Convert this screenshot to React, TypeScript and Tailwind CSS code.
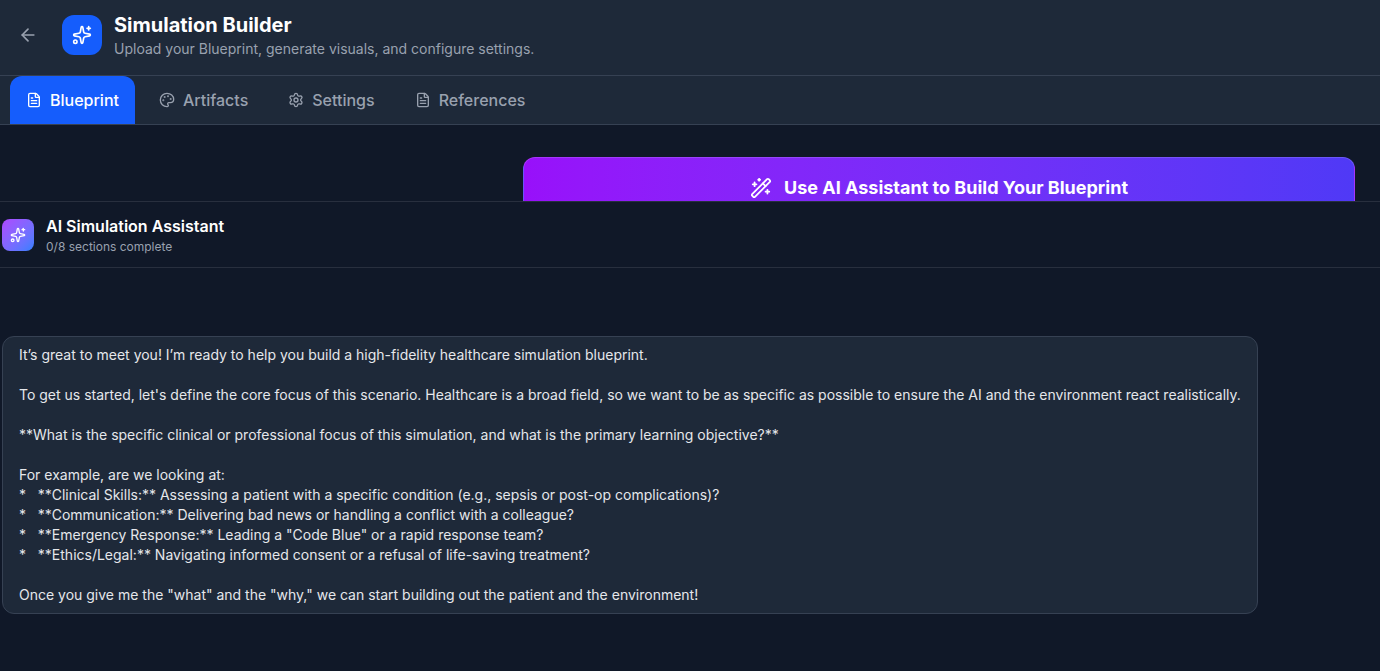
import React, { useState } from 'react';
import { ArrowLeft, FileText, Palette, Settings, Sparkles, WandSparkles } from 'lucide-react';

const tabs = [
  { id: 'blueprint', label: 'Blueprint', icon: FileText },
  { id: 'artifacts', label: 'Artifacts', icon: Palette },
  { id: 'settings', label: 'Settings', icon: Settings },
  { id: 'references', label: 'References', icon: FileText },
];

const greeting = `It’s great to meet you! I’m ready to help you build a high-fidelity healthcare simulation blueprint.

To get us started, let's define the core focus of this scenario. Healthcare is a broad field, so we want to be as specific as possible to ensure the AI and the environment react realistically.

**What is the specific clinical or professional focus of this simulation, and what is the primary learning objective?**

For example, are we looking at:
*   **Clinical Skills:** Assessing a patient with a specific condition (e.g., sepsis or post-op complications)?
*   **Communication:** Delivering bad news or handling a conflict with a colleague?
*   **Emergency Response:** Leading a "Code Blue" or a rapid response team?
*   **Ethics/Legal:** Navigating informed consent or a refusal of life-saving treatment?

Once you give me the "what" and the "why," we can start building out the patient and the environment!`;

function PageHeader() {
  return (
    <header className="flex items-center border-b border-gray-700 bg-gray-800 px-2 pt-[11px] pb-4">
      <button type="button" aria-label="Back" className="mr-3.5 rounded-lg p-2.5 text-gray-400 hover:bg-gray-700">
        <ArrowLeft className="size-5" />
      </button>
      <div className="mr-3 flex size-10 items-center justify-center rounded-xl bg-[#155dfc]">
        <Sparkles className="size-5" />
      </div>
      <div>
        <h1 className="text-xl font-bold">Simulation Builder</h1>
        <p className="text-sm text-gray-400">Upload your Blueprint, generate visuals, and configure settings.</p>
      </div>
    </header>
  );
}

export default function App() {
  const [activeTab, setActiveTab] = useState('blueprint');

  return (
    <div className="min-h-screen bg-gray-900 font-['Inter',sans-serif] text-white">
      <PageHeader />

      {/* Tabs */}
      <nav className="flex gap-2 border-b border-gray-700 bg-gray-800 px-2.5">
        {tabs.map(({ id, label, icon: Icon }) => (
          <button
            key={id}
            type="button"
            onClick={() => setActiveTab(id)}
            className={`flex items-center gap-2 rounded-t-xl px-4 py-3 text-base font-medium ${
              activeTab === id ? 'bg-[#155dfc] text-white' : 'text-gray-400 hover:text-white'
            }`}
          >
            <Icon className="size-4" />
            {label}
          </button>
        ))}
      </nav>

      {/* Blueprint content, cut off by the assistant panel */}
      <main className="h-19 overflow-hidden pt-8 pr-[25px] pl-4">
        <button
          type="button"
          className="ml-auto flex w-full max-w-[832px] items-center justify-center gap-3 rounded-xl border border-white/15 bg-linear-to-r from-purple-600 to-indigo-600 py-4 text-lg font-bold"
        >
          <WandSparkles className="size-[22px]" />
          Use AI Assistant to Build Your Blueprint
        </button>
      </main>

      {/* Assistant */}
      <section>
        <div className="flex items-center gap-3 border-y border-white/10 px-0.5 py-3">
          <div className="flex size-8 items-center justify-center rounded-lg bg-linear-to-br from-purple-500 to-blue-500">
            <Sparkles className="size-4" />
          </div>
          <div>
            <h2 className="mb-px text-base font-semibold">AI Simulation Assistant</h2>
            <p className="text-xs text-gray-400">0/8 sections complete</p>
          </div>
        </div>
        <div className="px-0.5 pt-17 pb-14">
          <div className="w-fit rounded-xl border border-gray-700 bg-gray-800 px-4 py-2 text-sm whitespace-pre-wrap text-gray-200">
            {greeting}
          </div>
        </div>
      </section>
    </div>
  );
}
